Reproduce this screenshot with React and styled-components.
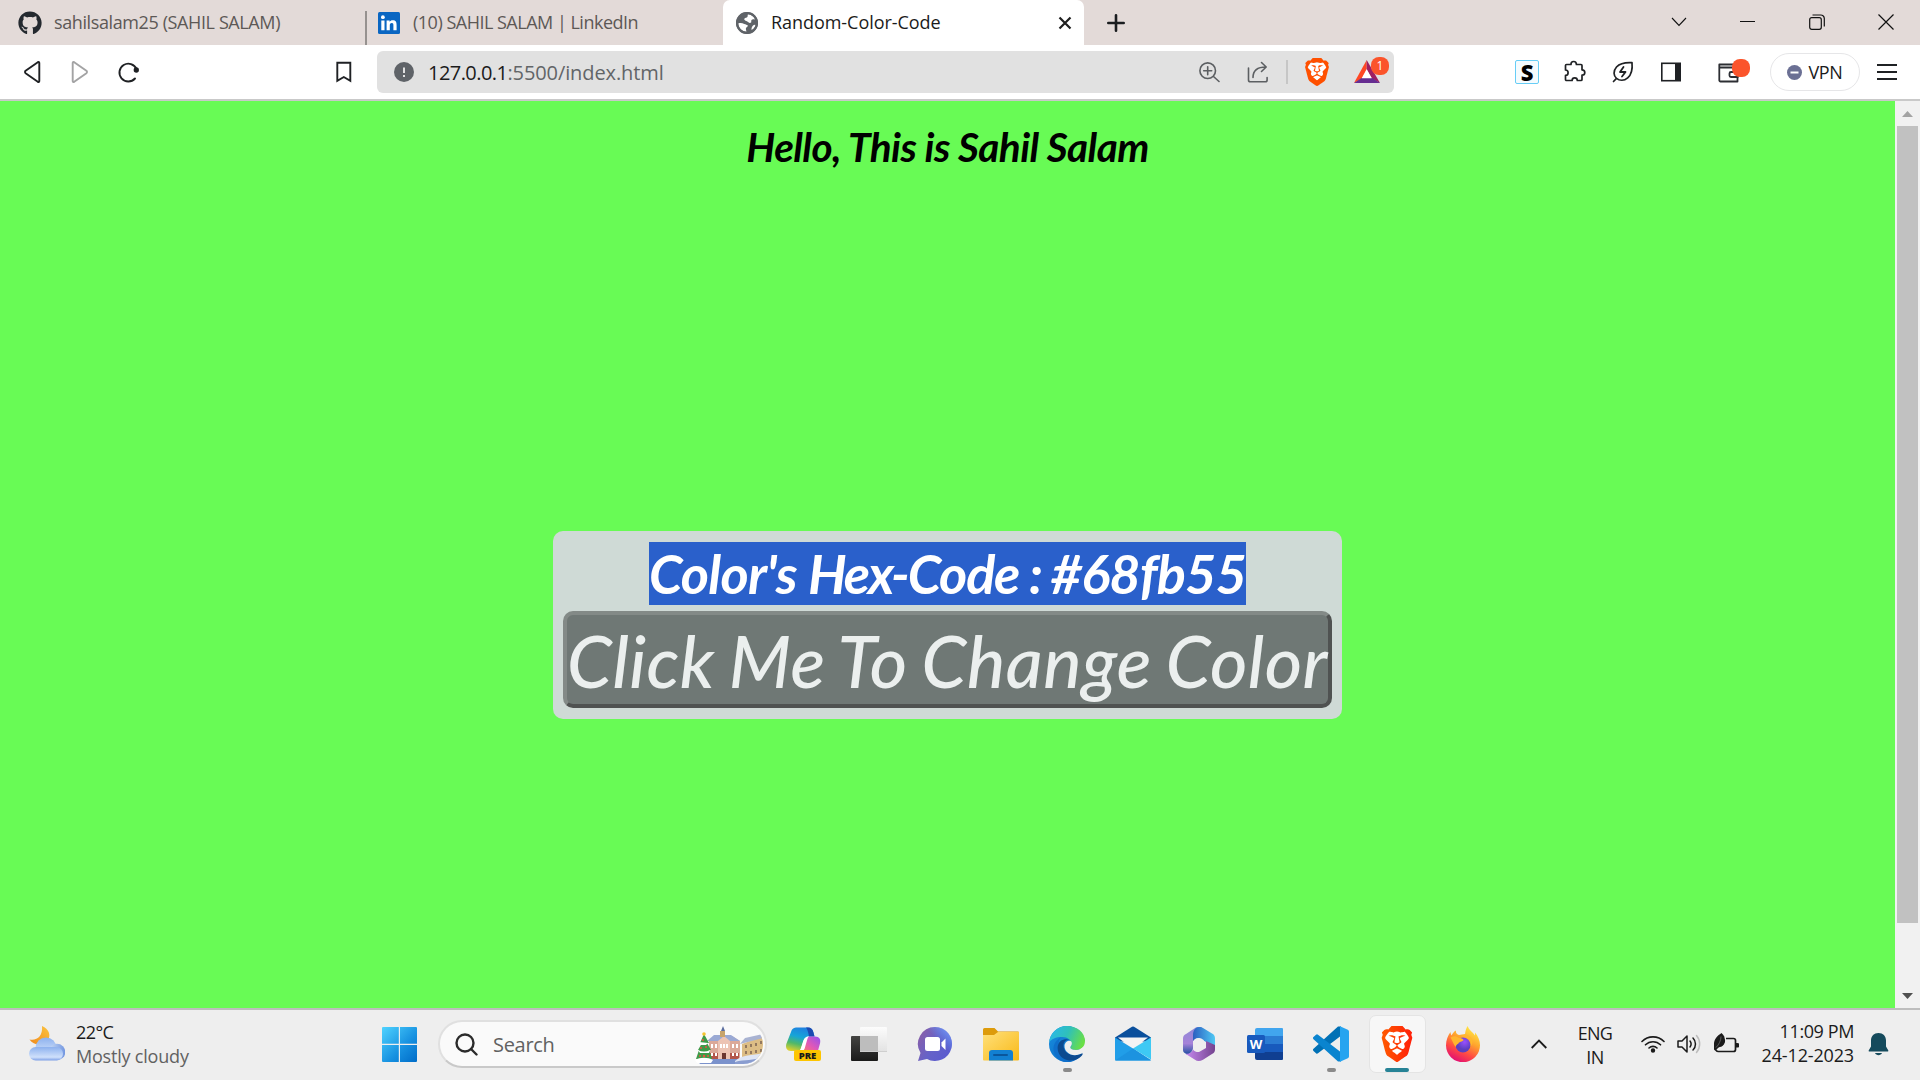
import React from "react";
import styled, { createGlobalStyle } from "styled-components";
import { FaGithub } from "react-icons/fa";
import { SiBrave } from "react-icons/si";

const Global = createGlobalStyle`
  * { box-sizing: border-box; }
  body { margin: 0; overflow: hidden; }
  svg { display: block; flex: none; }
`;

const Screen = styled.div`
  width: 1920px;
  height: 1080px;
  display: flex;
  flex-direction: column;
  font-family: "Open Sans", "Noto Sans", sans-serif;
  overflow: hidden;
`;

const Label = styled.span`
  font-size: ${(p) => p.$size || 18}px;
  letter-spacing: ${(p) => p.$track || 0}px;
  color: ${(p) => p.$color || "#1b1b1b"};
  line-height: 24px;
  white-space: nowrap;
`;

/* Tab strip */
const TabStrip = styled.header`
  height: 45px;
  display: flex;
  background: #e3dad8;
`;
const Tab = styled.div`
  width: ${(p) => p.$width}px;
  padding-left: ${(p) => p.$pad}px;
  display: flex;
  align-items: center;
  gap: ${(p) => p.$gap}px;
  background: ${(p) => (p.$active ? "#fff" : "transparent")};
  border-radius: 7px 7px 0 0;
`;
const TabTitle = styled(Label)`
  padding-bottom: 2px;
`;
const TabDivider = styled.i`
  width: 2px;
  height: 34px;
  margin-top: 11px;
  background: #96918f;
`;
const TabClose = styled.div`
  margin-left: auto;
  padding-right: 12px;
`;
const NewTab = styled.div`
  width: 64px;
  display: grid;
  place-items: center;
`;
const WindowControls = styled.div`
  margin-left: auto;
  display: flex;
  height: 43px;
`;
const Control = styled.div`
  width: ${(p) => p.$width || 69}px;
  display: grid;
  place-items: center;
`;

/* Toolbar */
const Toolbar = styled.nav`
  height: 56px;
  padding-left: 8px;
  display: flex;
  align-items: center;
  background: #fff;
  border-bottom: 2px solid #c9c9c9;
`;
const ToolCell = styled.div`
  width: ${(p) => p.$width || 48}px;
  margin-left: ${(p) => p.$before || 0}px;
  display: grid;
  place-items: center;
`;
const AddressBar = styled.div`
  width: 1017px;
  height: 42px;
  margin-left: 9px;
  padding: 0 5px 0 17px;
  display: flex;
  align-items: center;
  background: #e1e1e1;
  border-radius: 6px;
`;
const Url = styled.div`
  margin-left: 14px;
  padding-top: 2px;
  flex: 1;
  display: flex;
`;
const AddressActions = styled.div`
  display: flex;
  align-items: center;
`;
const ActionDivider = styled.i`
  width: 2px;
  height: 24px;
  margin: 0 16px 0 17px;
  background: #c6c6c6;
`;
const Rewards = styled.div`
  position: relative;
  width: 36px;
  height: 30px;
  margin-left: 23px;
`;
const Badge = styled.span`
  position: absolute;
  right: 0;
  top: 0;
  width: 18px;
  height: 18px;
  border-radius: 8px;
  background: #fb542b;
  color: #fff;
  font-size: 12px;
  line-height: 18px;
  text-align: center;
`;
const ExtensionS = styled.div`
  width: 24px;
  height: 24px;
  border: 1px solid #67cdf6;
  border-radius: 2px;
  background: #f5fbfe;
  font-size: 22px;
  font-weight: 800;
  line-height: 22px;
  text-align: center;
  color: #000;
`;
const VpnPill = styled.div`
  width: 90px;
  height: 38px;
  border: 1px solid #e6e6e8;
  border-radius: 19px;
  display: flex;
  align-items: center;
  justify-content: center;
  gap: 6px;
`;

/* Page */
const Viewport = styled.main`
  height: 907px;
  display: flex;
`;
const Page = styled.div`
  width: 1895px;
  background: #68fb55;
  display: flex;
  flex-direction: column;
  align-items: center;
  font-family: Lato, sans-serif;
  font-style: italic;
`;
const Greeting = styled.h1`
  margin: 21px 0 0;
  font-size: 40.5px;
  line-height: 49px;
  font-weight: 700;
  letter-spacing: -0.58px;
  color: #000;
`;
const Card = styled.section`
  margin-top: 360px;
  width: 789px;
  height: 188px;
  padding: 11px 10px;
  border-radius: 10px;
  background: #cfdad6;
  display: flex;
  flex-direction: column;
  align-items: center;
`;
const HexCode = styled.h2`
  margin: 0;
  width: 597px;
  height: 63px;
  background: #2a60cb;
  color: #fff;
  font-size: 54px;
  line-height: 64px;
  font-weight: 700;
  letter-spacing: -1.2px;
  white-space: nowrap;
`;
const Tracked = styled.span`
  letter-spacing: ${(p) => p.$track}px;
`;
const ChangeButton = styled.button`
  margin-top: 6px;
  width: 769px;
  height: 97px;
  padding: 0;
  flex: none;
  border: 4px solid;
  border-color: #838a87 #4f5251 #4f5251 #838a87;
  border-radius: 10px;
  background: #6f7875;
  color: #ebefee;
  font: italic 500 72px/88px Lato, sans-serif;
  letter-spacing: 0.45px;
  word-spacing: -3px;
  white-space: nowrap;
`;
const Scrollbar = styled.aside`
  width: 25px;
  background: #f1f1f1;
  display: flex;
  flex-direction: column;
  align-items: center;
`;
const ScrollArrow = styled.div`
  height: 25px;
  display: grid;
  place-items: center;
`;
const ScrollThumb = styled.div`
  width: 21px;
  height: 797px;
  margin-bottom: 60px;
  background: #c1c1c1;
`;

/* Taskbar */
const Taskbar = styled.footer`
  height: 72px;
  border-top: 2px solid #bdbdbd;
  background: #eee;
  display: flex;
`;
const Weather = styled.div`
  width: 382px;
  padding: 0 0 3px 29px;
  display: flex;
  align-items: center;
  gap: 11px;
`;
const Stack = styled.div`
  display: flex;
  flex-direction: column;
  align-items: ${(p) => p.$align || "flex-start"};
`;
const Start = styled.div`
  padding-top: 17px;
  width: 56px;
`;
const SearchBox = styled.div`
  margin-top: 10px;
  width: 329px;
  height: 48px;
  padding: 0 2px 0 15px;
  display: flex;
  align-items: center;
  gap: 15px;
  border: 2px solid #e0e0e0;
  border-bottom-color: #c9c9c9;
  border-radius: 24px;
  background: #fafafa;
`;
const SearchHint = styled(Label)`
  padding-top: 2px;
`;
const SearchArt = styled.div`
  margin-left: auto;
  border-radius: 0 20px 20px 0;
  overflow: hidden;
`;
const Apps = styled.div`
  margin-left: 3px;
  display: flex;
`;
const AppCell = styled.div`
  width: 66px;
  display: flex;
  flex-direction: column;
  align-items: center;
`;
const AppTile = styled.div`
  width: 57px;
  height: 58px;
  margin-top: 5px;
  border-radius: 7px;
  border: 1px solid ${(p) => (p.$active ? "#e4e4e4" : "transparent")};
  background: ${(p) => (p.$active ? "#f7f7f7" : "transparent")};
  display: flex;
  flex-direction: column;
  align-items: center;
  padding-top: 10px;
`;
const Indicator = styled.i`
  width: ${(p) => (p.$active ? 24 : 9)}px;
  height: 5px;
  margin-top: 6px;
  border-radius: 3px;
  background: ${(p) => (p.$active ? "#278396" : "#8a8a8a")};
`;
const Tray = styled.div`
  margin-left: auto;
  padding: 0 31px 2px 0;
  display: flex;
  align-items: center;
`;
const Language = styled(Stack)`
  width: 36px;
  margin: 2px 28px 0 30px;
`;
const Clock = styled(Stack)`
  width: 110px;
  margin-right: 14px;
  padding-bottom: 2px;
`;
const TrayIcons = styled.div`
  display: flex;
  align-items: center;
  gap: 12px;
  margin-right: 5px;
`;

const line = { fill: "none", stroke: "#1f2124", strokeWidth: 1.7, strokeLinecap: "round", strokeLinejoin: "round" };

const LinkedIn = () => (
  <svg width="22" height="22" viewBox="0 0 22 22">
    <rect width="22" height="22" rx="1.5" fill="#0a66c2" />
    <circle cx="4.9" cy="5.2" r="1.9" fill="#fff" />
    <path d="M3.3 8.6h3.2v9.6H3.3zM8.6 8.6h3v1.3c.5-.9 1.6-1.6 3.1-1.6 3.2 0 3.9 2 3.9 4.7v5.2h-3.2v-4.7c0-1.2 0-2.4-1.6-2.4s-2 1.2-2 2.4v4.7H8.6z" fill="#fff" />
  </svg>
);
const Globe = () => (
  <svg width="22" height="22" viewBox="0 0 22 22">
    <circle cx="11" cy="11" r="11" fill="#5f6368" />
    <path d="M2.3 11.5c2.3-.8 4.3-.2 5.8.4 1.5.5 3.3.8 3.8 1.7.4.8-.9 1.2-1.7 2.1-.6.7-.3 1.8.3 3.7C6 19.8 2.7 16 2.3 11.500zM12 2.300c3.500.4 6 2.300 7.200 5.200-1.500-.3-3-.5-3.700.4-.7.9.4 2.500-.9 2.900-1.500.5-2.400-.8-3.700-1.500C9 8.300 7.600 8 8.500 6.500c.6-1 2.300-.7 2.900-1.600.5-.7 0-1.700.6-2.600zM17 13.500c.8-.7 1.900-1 2.500-.6-.4 2-1.800 4-3.900 5.100-.3-1.700.3-3.500 1.400-4.500z" fill="#fff" />
    <circle cx="11" cy="11" r="10" fill="none" stroke="#5f6368" strokeWidth="2" />
  </svg>
);
const Zoom = () => (
  <svg width="21" height="21" viewBox="0 0 21 21" {...line} stroke="#5c5f62" strokeWidth="1.6">
    <circle cx="8.7" cy="8.7" r="7.8" />
    <path d="M14.5 14.5l5.500 5M4.700 8.700h8M8.700 4.700v8" />
  </svg>
);
const Share = () => (
  <svg width="22" height="22" viewBox="0 0 22 22" {...line} stroke="#5c5f62" strokeWidth="1.6">
    <path d="M1.500 7v12a1.800 1.800 0 0 0 1.800 1.800h15a1.800 1.800 0 0 0 1.800-1.800v-2.500M6 16.500C6 9.500 10 6 19 6M14.500 1.500L19.200 6l-4.700 4.500" />
  </svg>
);
const Bat = () => (
  <svg width="28" height="30" viewBox="0 0 28 30">
    <path d="M13.700 3L1 26l8-4.500 4.700-8.500z" fill="#ff4724" />
    <path d="M13.700 3v10l5.300 8.500 8 4.500z" fill="#9e1f63" />
    <path d="M1 26l7.500-5H19.500l7.500 5z" fill="#662d91" />
    <path d="M13.700 12l-5 9.300h10z" fill="#fff" />
  </svg>
);
const Puzzle = () => (
  <svg width="24" height="24" viewBox="0 0 24 24" {...line}>
    <path d="M3.500 4.500h4.500c0-1.300.3-3 2.700-3s2.700 1.700 2.700 3h4.600a1 1 0 0 1 1 1v4.300c1.200 0 2.800.5 2.800 2.700s-1.600 2.700-2.800 2.700v4.300a1 1 0 0 1-1 1h-3.700c0-1.500-.8-2.600-2.600-2.600s-2.600 1.100-2.600 2.600H3.500a1 1 0 0 1-1-1v-4.100c1.400 0 2.600-.9 2.600-2.700S3.900 10 2.500 10V5.500a1 1 0 0 1 1-1z" />
  </svg>
);
const Leaf = () => (
  <svg width="22" height="22" viewBox="0 0 22 22" {...line}>
    <path d="M1.500 20.500l3-3.200M4.500 17.300C1.500 15 1 10 4.500 6 8 2.300 13.500 1.300 20 1.700c.6 6-.5 12-4.300 15.200-3.700 3.200-8.200 2.900-11.200.4z" />
    <path d="M11.500 6L8 11h5.500L10 15.500" strokeWidth="1.800" />
  </svg>
);
const Wallet = () => (
  <svg width="34" height="26" viewBox="0 0 34 26">
    <g {...line} stroke="#2c2e33" strokeWidth="1.800">
      <path d="M3.500 5.500h18v17H4.500a1.200 1.200 0 0 1-1.200-1.200V5.500zM3.500 8.500h18M22 13h-7a1.500 1.500 0 0 0-1.500 1.500v2A1.500 1.500 0 0 0 15 18h7" />
    </g>
    <rect x="16" y="0" width="18" height="18" rx="8" fill="#fb542b" />
  </svg>
);
const WeatherIcon = () => (
  <svg width="36" height="36" viewBox="0 0 36 36">
    <defs>
      <linearGradient id="moon" x1="0" y1="1" x2="1" y2="0"><stop stopColor="#f08a1c" /><stop offset="1" stopColor="#fbc440" /></linearGradient>
      <linearGradient id="cloud" x1="0" y1="0" x2="0" y2="1"><stop stopColor="#8db1ee" /><stop offset=".75" stopColor="#cfe0fb" /><stop offset="1" stopColor="#7c9fe6" /></linearGradient>
      <linearGradient id="cloudR"><stop stopColor="#c9dcf5" /><stop offset="1" stopColor="#7195e0" /></linearGradient>
    </defs>
    <path d="M13 0c7 3 9 9 6 14-4 6-14 6-18.500-.5C8 15 14 10 13 0z" fill="url(#moon)" />
    <circle cx="17" cy="22" r="10.500" fill="url(#cloud)" />
    <circle cx="28" cy="26" r="8.300" fill="url(#cloudR)" />
    <rect y="21" width="34" height="13.500" rx="6.700" fill="url(#cloud)" />
  </svg>
);
const Windows = () => (
  <svg width="35" height="35" viewBox="0 0 35 35">
    <defs><linearGradient id="win" gradientUnits="userSpaceOnUse" x1="0" y1="0" x2="35" y2="35"><stop stopColor="#4fd3ff" /><stop offset=".6" stopColor="#1690e0" /><stop offset="1" stopColor="#006cc8" /></linearGradient></defs>
    <path fill="url(#win)" d="M1 0h15.800v16.800H0V1a1 1 0 0 1 1-1zM18 0h16a1 1 0 0 1 1 1v15.800H18zM0 18h16.800v17H1a1 1 0 0 1-1-1zM18 18h17v16a1 1 0 0 1-1 1H18z" />
  </svg>
);
const Village = () => (
  <svg width="68" height="39" viewBox="0 0 68 39">
    <path d="M8 36c12-5 40-3 60-1v4H4z" fill="#7b92cc" />
    <path d="M14 16l7-5 8 2 8-2 8 5v18H14z" fill="#dba999" />
    <path d="M12 16l7-6h17l9 6z" fill="#9aa9d4" />
    <path d="M15 28h29v6H15z" fill="#b3564b" />
    <path d="M23 16l6-5 6 5v18H23z" fill="#ecc4b4" />
    <path d="M26 10V6l2-5 2 5v4z" fill="#5b6d9e" />
    <path d="M25 6h5v6h-5z" fill="#c8a46b" />
    <g fill="#fff"><path d="M16 19h2v4h-2zM20 19h2v4h-2zM25 19h2v4h-2zM28 19h2v4h-2zM31 19h2v4h-2zM37 19h2v4h-2zM41 19h2v4h-2zM16 28h2v3h-2zM20 28h2v3h-2zM37 28h2v3h-2zM41 28h2v3h-2z" /></g>
    <path d="M27 28h4v6h-4z" fill="#6a3630" />
    <path d="M47 19l21-8v23H47z" fill="#dcbd85" />
    <path d="M45 19l5-6 18-4v4z" fill="#a9b3d2" />
    <g fill="#93795f"><path d="M50 20h2v3h-2zM55 19h2v3h-2zM60 18h2v3h-2zM65 16h2v3h-2zM50 26h2v3h-2zM55 26h2v3h-2zM60 25h2v3h-2zM65 24h2v3h-2z" /></g>
    <path d="M9 9l5 9h-2l4 7h-2l3 9H1l3-9H3l4-7H5z" fill="#3f9a48" />
    <g fill="#fff"><path d="M4 17l9 1-2 2H6zM3 25c4 2 8 2 12 0l-1 3H5zM0 35c5-3 13-3 18 0l-2 3H2z" /></g>
    <g fill="#e8503f"><circle cx="8" cy="15" r="1" /><circle cx="11" cy="22" r="1" /><circle cx="6" cy="23" r="1" /><circle cx="9" cy="31" r="1.200" /><circle cx="13" cy="31" r="1" /><circle cx="5" cy="31" r="1" /></g>
    <circle cx="9" cy="9" r="1.800" fill="#f4c431" />
    <path d="M40 36c8-7 16-5 28-8v11H40z" fill="#dfe6f5" />
    <path d="M40 37c10-3 18-1 28-5v7H40z" fill="#8a9dd0" />
  </svg>
);
const Copilot = () => (
  <svg width="36" height="36" viewBox="0 0 36 36">
    <defs>
      <linearGradient id="cpA" x1=".6" y1="0" x2=".3" y2="1"><stop stopColor="#1f7fe0" /><stop offset=".4" stopColor="#16a5d8" /><stop offset=".7" stopColor="#4fb86a" /><stop offset="1" stopColor="#d9cf2e" /></linearGradient>
      <linearGradient id="cpB" x1="1" y1="0" x2="0" y2="1"><stop stopColor="#9350f0" /><stop offset=".5" stopColor="#e359b5" /><stop offset="1" stopColor="#ff8c4a" /></linearGradient>
    </defs>
    <path d="M6 6c1-3.500 3-4.500 6-4.500h11c3 0 4.500 1.500 5.300 4.500l1.200 4.500h-6c-2.500 0-4 1.500-5 4.500l-2 6c-1 3-2 4-5 4H6C2 25 .3 22 1.300 18z" fill="url(#cpA)" />
    <path d="M21 1.500h2c3 0 4.500 1.500 5.300 4.500l1.200 4.500h-5.500c-.8-4-1.500-7.500-3-9z" fill="#1c49b0" />
    <path d="M24 10.500h6c4.500 0 6 3 5 7l-2 7c-.7 2-2 3-4 3H14c3-.5 4-2 5-5l2-8c.6-2.500 1.400-4 3-4z" fill="url(#cpB)" />
    <path d="M24 10.500c-3 0-4.800 1.500-5.800 4.500l-2.400 7.500c-.6 1.800-1.400 2.500-2.800 2.500h4.500c1.500-.5 2-2 2.600-4l2-7c.5-1.800 1-3 1.900-3.500z" fill="#fff" />
    <rect x="9" y="24" width="27" height="11" rx="2" fill="#fdc500" />
    <text x="22.500" y="33" fontFamily="Open Sans, sans-serif" fontSize="9.500" fontWeight="800" textAnchor="middle" fill="#1b1b1b">PRE</text>
  </svg>
);
const TaskView = () => (
  <svg width="36" height="36" viewBox="0 0 36 36">
    <defs>
      <linearGradient id="tv" x1="0" y1="0" x2="0" y2="1"><stop stopColor="#434341" /><stop offset="1" stopColor="#1a1a1a" /></linearGradient>
      <linearGradient id="tw" x1="0" y1="0" x2="0" y2="1"><stop stopColor="#fcfcfc" /><stop offset="1" stopColor="#e2e2e2" /></linearGradient>
    </defs>
    <rect y="10" width="27" height="25" rx="1" fill="url(#tv)" />
    <rect x="9" y="1" width="27" height="25" rx="1" fill="url(#tw)" />
    <rect x="9" y="10" width="18" height="15" fill="#bdbdbd" />
    <path d="M9 25.500h27" stroke="#cfcfcf" />
  </svg>
);
const Chat = () => (
  <svg width="36" height="36" viewBox="0 0 36 36">
    <defs><linearGradient id="chat" x1="0" y1=".2" x2="1" y2=".8"><stop stopColor="#8a5fa8" /><stop offset=".5" stopColor="#6562c8" /><stop offset="1" stopColor="#5a5bd0" /></linearGradient>
    <linearGradient id="chat2" x1="0" y1="1" x2="1" y2="0"><stop offset=".6" stopColor="#5a9bff" stopOpacity="0" /><stop offset="1" stopColor="#84a5ff" /></linearGradient></defs>
    <path d="M18 1a17 17 0 1 1-8 32L1 35l2.500-8A17 17 0 0 1 18 1z" fill="url(#chat)" />
    <circle cx="18" cy="18" r="17" fill="url(#chat2)" />
    <rect x="8" y="11" width="15" height="14" rx="2.500" fill="#fff" />
    <path d="M24.500 16.500l4-4v11.500l-4-4z" fill="#fff" />
  </svg>
);
const Folder = () => (
  <svg width="36" height="36" viewBox="0 0 36 36">
    <defs><linearGradient id="fd" x1="0" y1="0" x2="1" y2="1"><stop stopColor="#ffe07a" /><stop offset="1" stopColor="#f9b917" /></linearGradient></defs>
    <path d="M0 3.500A1.500 1.500 0 0 1 1.500 2h10L15 5.500h20a1 1 0 0 1 1 1V12H0z" fill="#dd9b0b" />
    <path d="M0 9h11l4-3h21v27.500a1 1 0 0 1-1 1H1a1 1 0 0 1-1-1z" fill="url(#fd)" />
    <path d="M6 34.500V27a3 3 0 0 1 3-3h18a3 3 0 0 1 3 3v7.500z" fill="#1280d2" />
    <rect x="10" y="28" width="15" height="2" rx="1" fill="#0a569c" />
  </svg>
);
const Edge = () => (
  <svg width="36" height="36" viewBox="0 0 36 36">
    <defs>
      <linearGradient id="e1" x1="0" y1=".2" x2="1" y2=".5"><stop stopColor="#2ab8ea" /><stop offset=".5" stopColor="#2fc0bb" /><stop offset="1" stopColor="#69df46" /></linearGradient>
      <linearGradient id="e2" x1="0" y1="0" x2="1" y2="1"><stop stopColor="#1a8fe0" /><stop offset="1" stopColor="#0664c0" /></linearGradient>
    </defs>
    <path d="M18 0a18 18 0 1 0 0 36c6.500 0 12-3.500 15.500-9.500L26 17 36 15C34.500 6.500 27 0 18 0z" fill="url(#e2)" />
    <path d="M.1 16.500C1 7 8.500 0 18 0c10 0 18 6.500 18 15 0 6-4.500 9-9 9-3.500 0-5.500-1.300-5.500-2.500 0-1 1.200-1.500 1.200-3.500 0-3.500-4-7-9.500-7C7 11 2 13 .1 16.500z" fill="url(#e1)" />
    <path d="M12 11.300C8.500 15 8.500 24 13 29c4.500 4.800 12 6 18 1.500C27 35 20.500 37.500 14 35.500 3 31 .5 18 12 11.300z" fill="#0f6fcb" />
    <path d="M22 15c-3-3-8 0-7.500 5.500C15 26 21 30.500 28 29c3-.6 5-2 5.500-1.700.8.500-1 3.200-3 4.500-7 5-17 3-20.500-4C7 22 9 14.500 15 13.500c3.500-.5 6 .3 7 1.500z" fill="#0c4a90" />
    <path d="M22.600 16c1 3-1.200 4.300-1.200 5.500C21.400 22.700 23.500 24 27 24c3 0 6-1.500 7.500-3.500L36 24l-2.500 3.300c-.5-.3-2.500 1.100-5.500 1.700-7 1-13-3.500-12.500-9.500.3-4 5.500-6.500 7.100-3.500z" fill="#eee" />
  </svg>
);
const Mail = () => (
  <svg width="36" height="36" viewBox="0 0 36 36">
    <path d="M0 11.500L17 .8a2 2 0 0 1 2 0l17 10.700v4H0z" fill="#0a4f9c" />
    <path d="M3 11.500h30L18 23z" fill="#f4f4f4" />
    <path d="M0 11.500L18 22.500 36 34v-.5a1 1 0 0 1-1 .9H1a1 1 0 0 1-1-1z" fill="#219ee8" />
    <path d="M36 11.500v22L18 22.500z" fill="#3ec9f4" />
    <path d="M0 34.400L18 22.500 36 34.400z" fill="#1c93e0" />
  </svg>
);
const M365 = () => (
  <svg width="36" height="36" viewBox="0 0 36 36">
    <defs>
      <linearGradient id="m1" x1="0" y1="0" x2="0" y2="1"><stop stopColor="#8f8ad8" /><stop offset=".6" stopColor="#a682d8" /><stop offset="1" stopColor="#1c4e9f" /></linearGradient>
      <linearGradient id="m2"><stop stopColor="#2b5fc0" /><stop offset="1" stopColor="#4fc8f4" /></linearGradient>
      <linearGradient id="m3"><stop stopColor="#c68af0" /><stop offset="1" stopColor="#74438f" /></linearGradient>
    </defs>
    <path d="M18 1c2 0 3 .5 4 1.300L15 12l-3 3v7c0 3-3 6-6 6.500l-3-2C2 25.500 2 24.500 2 23V12.500C2 10 3 9 5 8L14 2c1-.6 2-1 4-1z" fill="url(#m1)" />
    <path d="M18 1c2 0 3 .5 4 1l9 5.500c2 1 3 2.500 3 5V21l-9-5-7-4c-3 0-5 1-6 3V9c0-4 2-8 6-8z" fill="url(#m2)" />
    <path d="M34 19v4.500c0 2-1 3.500-3 4.500l-9 5.700c-3 1.700-6 1.700-8 0L4 27.500c4 1 7-1 8-4 1.500 2 4 2.800 6 2.500l7-4V15z" fill="url(#m3)" />
    <circle cx="18" cy="18" r="6" fill="#eee" />
  </svg>
);
const Word = () => (
  <svg width="36" height="36" viewBox="0 0 36 36">
    <path d="M10 2h25a1 1 0 0 1 1 1v7.500H8V4a2 2 0 0 1 2-2z" fill="#41a5ee" />
    <path d="M8 10h28v8H8z" fill="#2b7cd3" />
    <path d="M8 18h28v8H8z" fill="#185abd" />
    <path d="M8 26h28v7a1 1 0 0 1-1 1H10a2 2 0 0 1-2-2z" fill="#103f91" />
    <rect y="9" width="18" height="18" rx="1.500" fill="#185abd" />
    <text x="9" y="22.500" fontFamily="Open Sans, sans-serif" fontSize="13" fontWeight="700" textAnchor="middle" fill="#fff">W</text>
  </svg>
);
const Code = () => (
  <svg width="36" height="36" viewBox="0 0 36 36">
    <path d="M27 10.500L5 27.300a1.500 1.500 0 0 1-2-.1L.5 25a1.500 1.500 0 0 1 0-2.200L25 .5l3 0z" fill="#0070b5" />
    <path d="M27 25.500L5 8.700a1.500 1.500 0 0 0-2 .1L.5 11a1.500 1.500 0 0 0 0 2.200L25 35.500l3 0z" fill="#0a84cf" />
    <path d="M27 .3l7.800 3.500A2 2 0 0 1 36 5.700v24.600a2 2 0 0 1-1.200 1.900L27 35.700z" fill="#26a4f0" />
  </svg>
);
const BraveTask = () => (
  <svg width="36" height="36" viewBox="0 0 36 36">
    <defs><linearGradient id="brv"><stop stopColor="#ff5a00" /><stop offset="1" stopColor="#ff1f0a" /></linearGradient></defs>
    <path d="M9 5h18l4 7-5 17-8 5-8-5-5-17z" fill="#fff" />
    <SiBrave size={36} fill="url(#brv)" />
  </svg>
);
const Firefox = () => (
  <svg width="36" height="36" viewBox="0 0 36 36">
    <defs>
      <linearGradient id="f1" x1=".8" y1="0" x2=".3" y2="1"><stop stopColor="#fff14a" /><stop offset=".4" stopColor="#ffa52d" /><stop offset=".7" stopColor="#ff4a44" /><stop offset="1" stopColor="#e00b76" /></linearGradient>
      <radialGradient id="f2" cx=".6" cy=".3"><stop stopColor="#9a50ff" /><stop offset="1" stopColor="#5b3fc0" /></radialGradient>
    </defs>
    <path d="M22.500 0c1.500 4 5 6 7.500 9.500L30 6.500c3 3.500 5 8 5 12.500a17 17 0 0 1-34 .5C1 14 3 9.500 5.500 6c0 0 0 2 1 3.500C8 7 9 5.500 11 4.500 10.500 7 12 8.500 14 9l6-1C20.500 5 21 2.500 22.500 0z" fill="url(#f1)" />
    <circle cx="18" cy="19" r="7.500" fill="url(#f2)" />
    <path d="M5.500 11.500c3-2 6-1.500 8.500.5 2 0 4 .5 4.500 2-1 2-4.500 1.500-5 3.500-1 .5-2.500 1.500-3 3.500-2-3-3-6-5-9.500z" fill="#ffb52e" />
    <path d="M19 8c5 2.500 8 6.500 6.500 12.500C30 16 27 9 19 8z" fill="#ffb82c" />
  </svg>
);

const apps = [
  { id: "copilot", Icon: Copilot },
  { id: "taskview", Icon: TaskView },
  { id: "chat", Icon: Chat },
  { id: "files", Icon: Folder },
  { id: "edge", Icon: Edge, running: true },
  { id: "mail", Icon: Mail },
  { id: "m365", Icon: M365 },
  { id: "word", Icon: Word },
  { id: "code", Icon: Code, running: true },
  { id: "brave", Icon: BraveTask, running: true, active: true },
  { id: "firefox", Icon: Firefox },
];

export default function App() {
  return (
    <Screen>
      <Global />
      <TabStrip>
        <Tab $width={365} $pad={18} $gap={12}>
          <FaGithub size={24} color="#24292f" />
          <TabTitle $track={-0.39} $color="#5d5856">sahilsalam25 (SAHIL SALAM)</TabTitle>
        </Tab>
        <TabDivider />
        <Tab $width={356} $pad={11} $gap={13}>
          <LinkedIn />
          <TabTitle $track={-0.5} $color="#5d5856">(10) SAHIL SALAM | LinkedIn</TabTitle>
        </Tab>
        <Tab $width={361} $pad={13} $gap={13} $active>
          <Globe />
          <TabTitle $track={-0.05}>Random-Color-Code</TabTitle>
          <TabClose>
            <svg width="14" height="14" viewBox="0 0 14 14" stroke="#1f1f1f" strokeWidth="2.2"><path d="M1.500 1.500l11 11M12.500 1.500l-11 11" /></svg>
          </TabClose>
        </Tab>
        <NewTab>
          <svg width="18" height="18" viewBox="0 0 18 18" stroke="#1b1d20" strokeWidth="2.6" strokeLinecap="round"><path d="M9 1.300v15.400M1.300 9h15.400" /></svg>
        </NewTab>
        <WindowControls>
          <Control $width={68}><svg width="16" height="10" viewBox="0 0 16 10" fill="none" stroke="#111" strokeWidth="1.100"><path d="M1 1l7 7.500L15 1" /></svg></Control>
          <Control><svg width="16" height="4" viewBox="0 0 16 4"><path d="M0 1.500h15" stroke="#111" strokeWidth="1" /></svg></Control>
          <Control><svg width="16" height="16" viewBox="0 0 16 16" fill="none" stroke="#111" strokeWidth="1.200"><rect x=".7" y="3.700" width="11.600" height="11.600" rx="2" /><path d="M3.500 1h8.300A3.500 3.500 0 0 1 15.300 4.500v8" /></svg></Control>
          <Control><svg width="16" height="16" viewBox="0 0 16 16" stroke="#111" strokeWidth="1.200"><path d="M.5.5l15 15M15.500.5l-15 15" /></svg></Control>
        </WindowControls>
      </TabStrip>

      <Toolbar>
        <ToolCell><svg width="18" height="22" viewBox="0 0 18 22" {...line} strokeWidth="1.9"><path d="M14.800 1.200L2.600 9.800a1.500 1.500 0 0 0 0 2.400l12.200 8.600c.9.500 1.500.1 1.500-.9V2.100c0-1-.6-1.400-1.500-.9z" /></svg></ToolCell>
        <ToolCell><svg width="18" height="22" viewBox="0 0 18 22" {...line} stroke="#a3a3a4" strokeWidth="1.9"><path d="M3.200 1.200l12.200 8.600a1.500 1.500 0 0 1 0 2.400L3.200 20.800c-.9.500-1.500.1-1.500-.9V2.100c0-1 .6-1.400 1.500-.9z" /></svg></ToolCell>
        <ToolCell><svg width="22" height="22" viewBox="-1 0 22 22" {...line} strokeWidth="1.9"><path d="M18.500 8A8.900 8.900 0 1 0 17 17.500" /><circle cx="18.300" cy="9" r="1.700" fill="#1f2124" /></svg></ToolCell>
        <ToolCell $before={168}><svg width="16" height="22" viewBox="0 0 16 22" {...line} strokeLinejoin="miter" strokeWidth="1.9"><path d="M1.300 1.800h13v18L7.800 16l-6.500 3.800z" /></svg></ToolCell>
        <AddressBar>
          <svg width="20" height="20" viewBox="0 0 20 20"><circle cx="10" cy="10" r="10" fill="#5f6368" /><path d="M10 5.500v5.500M10 13v2" stroke="#e1e1e1" strokeWidth="2" /></svg>
          <Url>
            <Label $size={20} $track={-0.55} $color="#1b1b1b">127.0.0.1</Label>
            <Label $size={20} $track={-0.1} $color="#626568">:5500/index.html</Label>
          </Url>
          <AddressActions>
            <Zoom />
            <ToolCell $width={22} $before={27}><Share /></ToolCell>
            <ActionDivider />
            <svg width="26" height="28" viewBox="0 0 26 28">
              <path d="M6 5h14l3 7-4 11-6 4-6-4-4-11z" fill="#fff" />
              <SiBrave size={28} x={-1} color="#ff5000" />
            </svg>
            <Rewards><Bat /><Badge>1</Badge></Rewards>
          </AddressActions>
        </AddressBar>
        <ToolCell $before={109}><ExtensionS>S</ExtensionS></ToolCell>
        <ToolCell><Puzzle /></ToolCell>
        <ToolCell><Leaf /></ToolCell>
        <ToolCell><svg width="20" height="20" viewBox="0 0 20 20"><rect x=".8" y="1.300" width="18.400" height="17.400" fill="none" stroke="#1f2124" strokeWidth="1.600" /><path d="M14 1h5.500v18H14z" fill="#1f2124" /></svg></ToolCell>
        <ToolCell $width={75}><Wallet /></ToolCell>
        <VpnPill>
          <svg width="15" height="15" viewBox="0 0 15 15"><circle cx="7.500" cy="7.500" r="7.500" fill="#6b7094" /><path d="M3.500 7.500h8" stroke="#fff" strokeWidth="2" /></svg>
          <Label $track={-0.35}>VPN</Label>
        </VpnPill>
        <ToolCell $width={54}><svg width="20" height="16" viewBox="0 0 20 16" stroke="#1f2124" strokeWidth="1.800"><path d="M0 1h20M0 8h20M0 15h20" /></svg></ToolCell>
      </Toolbar>

      <Viewport>
        <Page>
          <Greeting>Hello, This is Sahil Salam</Greeting>
          <Card>
            <HexCode>
              <Tracked $track={-0.75}>Color's </Tracked>
              <Tracked $track={-2.1}>Hex-</Tracked>
              <Tracked $track={-1.2}>Code</Tracked>
              <Tracked $track={-2}> : </Tracked>
              <Tracked $track={-0.85}>#68fb55</Tracked>
            </HexCode>
            <ChangeButton>Click Me To Change Color</ChangeButton>
          </Card>
        </Page>
        <Scrollbar>
          <ScrollArrow><svg width="11" height="6" viewBox="0 0 11 6"><path d="M0 6l5.500-6L11 6z" fill="#a3a3a3" /></svg></ScrollArrow>
          <ScrollThumb />
          <ScrollArrow><svg width="11" height="6" viewBox="0 0 11 6"><path d="M0 0l5.500 6L11 0z" fill="#505050" /></svg></ScrollArrow>
        </Scrollbar>
      </Viewport>

      <Taskbar>
        <Weather>
          <WeatherIcon />
          <Stack>
            <Label $track={-0.6}>22°C</Label>
            <Label $track={-0.2} $color="#616161">Mostly cloudy</Label>
          </Stack>
        </Weather>
        <Start><Windows /></Start>
        <SearchBox>
          <svg width="23" height="23" viewBox="0 0 23 23" fill="none" stroke="#2b2b2b" strokeWidth="2.4" strokeLinecap="round"><circle cx="10" cy="10" r="8.500" /><path d="M16 16l5.500 5.500" /></svg>
          <SearchHint $size={20} $track={-0.3} $color="#616161">Search</SearchHint>
          <SearchArt><Village /></SearchArt>
        </SearchBox>
        <Apps>
          {apps.map(({ id, Icon, running, active }) => (
            <AppCell key={id}>
              <AppTile $active={active}>
                <Icon />
                {running && <Indicator $active={active} />}
              </AppTile>
            </AppCell>
          ))}
        </Apps>
        <Tray>
          <svg width="16" height="10" viewBox="0 0 16 10" fill="none" stroke="#1b1b1b" strokeWidth="1.800"><path d="M.7 9L8 1.500 15.300 9" /></svg>
          <Language $align="center">
            <Label $track={-0.7}>ENG</Label>
            <Label $track={-0.5}>IN</Label>
          </Language>
          <TrayIcons>
            <svg width="24" height="18" viewBox="0 0 24 18" fill="none" stroke="#1b1b1b" strokeWidth="1.600" strokeLinecap="round"><path d="M1 6.500a15.500 15.500 0 0 1 22 0M4.500 9.800a10.600 10.600 0 0 1 15 0M8 13a5.700 5.700 0 0 1 8 0" /><circle cx="12" cy="15.500" r="1.400" fill="#1b1b1b" /></svg>
            <svg width="25" height="20" viewBox="0 0 25 20" fill="none" stroke="#1b1b1b" strokeWidth="1.500" strokeLinecap="round" strokeLinejoin="round"><path d="M1 7v6h4l5 5V2L5 7zM13 7a5 5 0 0 1 0 6M16 4a8.500 8.500 0 0 1 0 12" /><path d="M19.500 1.500a13 13 0 0 1 0 17" stroke="#bdbdbd" /></svg>
            <svg width="25" height="22" viewBox="0 0 25 22"><path d="M12 5.500h7.500a2 2 0 0 1 2 2v9a2 2 0 0 1-2 2H4.500a3 3 0 0 1-2.500-1.200" fill="none" stroke="#1b1b1b" strokeWidth="1.700" /><path d="M22 10h1.300a1.500 1.500 0 0 1 0 4.500H22z" fill="#1b1b1b" /><path d="M7.500 0C12 4 12.500 10 8.500 13c-1.800 1.300-3.500.8-5 2.500L1.500 18 0 16.500C-.8 9 .5 4.500 7.500 0z" fill="#1b1b1b" /><path d="M7 3.500c0 4-2 8-5 11" fill="none" stroke="#888" strokeWidth=".6" /><path d="M11 4.500c1.300 4 .5 8-3 10" fill="none" stroke="#eee" strokeWidth="1" /></svg>
          </TrayIcons>
          <Clock $align="flex-end">
            <Label $track={-0.4}>11:09 PM</Label>
            <Label $track={-0.15}>24-12-2023</Label>
          </Clock>
          <svg width="21" height="24" viewBox="0 0 21 24" fill="#154a5c"><path d="M10.500 1c4.500 0 7.500 3 7.500 7.500v6l2.200 3.700c.4.700 0 1.300-.7 1.300h-18c-.7 0-1.100-.6-.7-1.300L3 14.500v-6C3 4 6 1 10.500 1zM7 21h7c-.6 1.300-2 2.200-3.500 2.200S7.600 22.300 7 21z" /></svg>
        </Tray>
      </Taskbar>
    </Screen>
  );
}
